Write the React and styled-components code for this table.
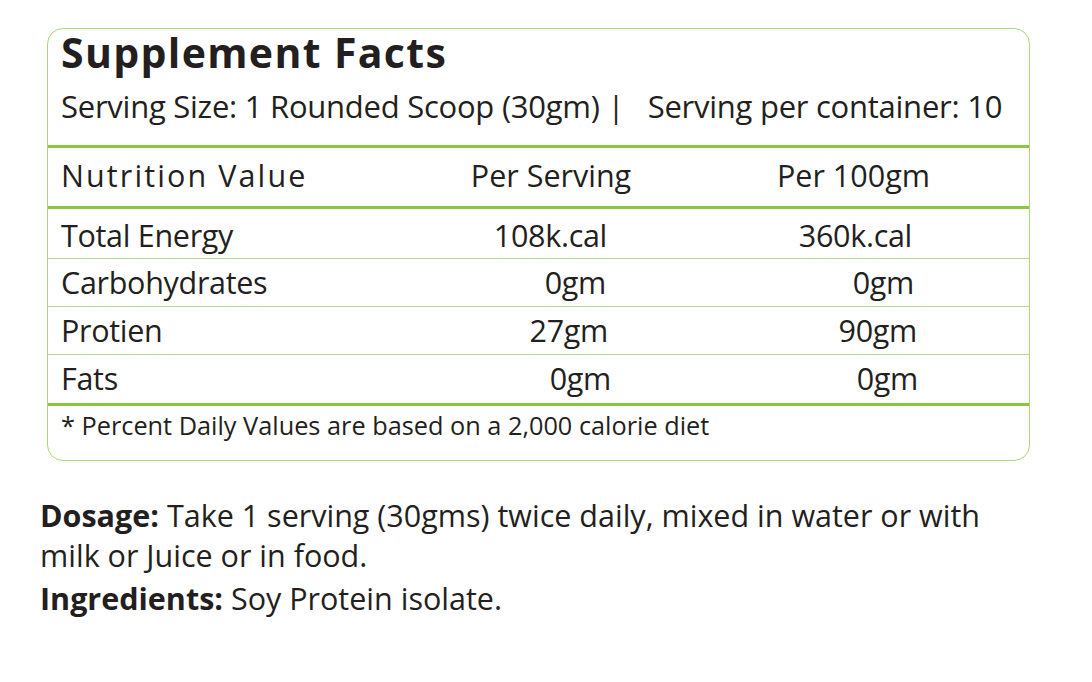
import React from "react";
import styled, { createGlobalStyle } from "styled-components";

const GlobalStyle = createGlobalStyle`
  html, body {
    margin: 0;
    padding: 0;
    background: #ffffff;
  }
  body {
    font-family: "Open Sans", "Noto Sans", sans-serif;
    color: #231f20;
  }
`;

// pad values keep the slightly uneven right edges of the printed label
const rows = [
  { name: "Total Energy", serving: "108k.cal", hundred: "360k.cal", padA: 67, padB: 117 },
  { name: "Carbohydrates", serving: "0gm", hundred: "0gm", padA: 68, padB: 115 },
  { name: "Protien", serving: "27gm", hundred: "90gm", padA: 66, padB: 112 },
  { name: "Fats", serving: "0gm", hundred: "0gm", padA: 63, padB: 111 },
];

export default function App() {
  return (
    <>
      <GlobalStyle />
      <Page>
        <FactsBox>
          <Heading>
            <Title>Supplement Facts</Title>
            <Serving>
              Serving Size: 1 Rounded Scoop (30gm) |&nbsp;&nbsp; Serving per container: 10
            </Serving>
          </Heading>
          <HeadRow>
            <Cell $spaced>Nutrition Value</Cell>
            <Cell $center>Per Serving</Cell>
            <Cell $center $shift={4}>Per 100gm</Cell>
          </HeadRow>
          <Body>
            {rows.map((row, i) => (
              <Row key={row.name} $first={i === 0}>
                <Cell>{row.name}</Cell>
                <Cell $right $pad={row.padA}>{row.serving}</Cell>
                <Cell $right $pad={row.padB}>{row.hundred}</Cell>
              </Row>
            ))}
          </Body>
          <Note>* Percent Daily Values are based on a 2,000 calorie diet</Note>
        </FactsBox>
        <Info>
          <Para>
            <b>Dosage:</b> Take 1 serving (30gms) twice daily, mixed in water or with
            <br />
            milk or Juice or in food.
          </Para>
          <Para>
            <b>Ingredients:</b> Soy Protein isolate.
          </Para>
        </Info>
      </Page>
    </>
  );
}

const Page = styled.div`
  width: 1092px;
  height: 682px;
  padding: 28px 0 0 47px;
  box-sizing: border-box;
`;

const FactsBox = styled.div`
  width: 983px;
  height: 433px;
  box-sizing: border-box;
  border: 1px solid #a9d873;
  border-radius: 16px;
  display: flex;
  flex-direction: column;
`;

const Heading = styled.div`
  height: 119px;
  padding: 0 0 0 13px;
  box-sizing: border-box;
  border-bottom: 3px solid #8cc63f;
`;

const Title = styled.h1`
  margin: 0;
  font-size: 41px;
  font-weight: 700;
  line-height: 46px;
  letter-spacing: 1.35px;
`;

const Serving = styled.div`
  font-size: 31px;
  letter-spacing: -0.25px;
  line-height: 40px;
  margin-top: 11px;
  white-space: nowrap;
`;

const Grid = styled.div`
  display: grid;
  grid-template-columns: 380px 246px 1fr;
  box-sizing: border-box;
`;

const HeadRow = styled(Grid)`
  height: 61px;
  padding-top: 7px;
  border-bottom: 3px solid #8cc63f;
  font-size: 30.5px;
  line-height: 40px;
`;

const Body = styled.div`
  border-bottom: 3px solid #8cc63f;
`;

const Row = styled(Grid)`
  height: ${({ $first }) => ($first ? "50px" : "48px")};
  padding-top: ${({ $first }) => ($first ? "3px" : "0")};
  font-size: 30.5px;
  letter-spacing: -0.3px;
  line-height: 47px;
  border-bottom: 1px solid #b4dd8b;
  &:last-child {
    border-bottom: none;
  }
`;

const Cell = styled.div`
  padding-left: ${({ $center, $right, $shift }) =>
    $shift ? `${$shift}px` : $center || $right ? "0" : "13px"};
  padding-right: ${({ $pad }) => ($pad ? `${$pad}px` : "0")};
  text-align: ${({ $center, $right }) => ($center ? "center" : $right ? "right" : "left")};
  letter-spacing: ${({ $spaced }) => ($spaced ? "2.1px" : "inherit")};
  white-space: nowrap;
`;

const Note = styled.div`
  padding: 2px 0 0 13px;
  font-size: 25.3px;
  line-height: 34px;
`;

const Info = styled.div`
  padding-top: 34px;
  margin-left: -7px;
`;

const Para = styled.p`
  margin: 0 0 3px 0;
  font-size: 30.5px;
  line-height: 40px;
  b {
    font-weight: 700;
  }
`;
